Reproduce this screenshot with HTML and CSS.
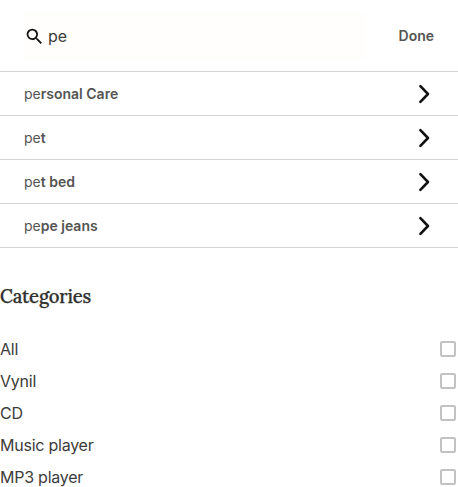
FILE: index.html
```html
<!DOCTYPE html>
<html lang="en">
<head>
<meta charset="utf-8">
<title>Search</title>
<link rel="stylesheet" href="styles.css">
</head>
<body>
<svg class="defs" aria-hidden="true">
  <symbol id="chevron" viewBox="0 0 12 20"><path d="M2.4 2.2 10 10 2.4 17.8"/></symbol>
</svg>
<header class="search">
  <div class="field">
    <svg class="glass" viewBox="0 0 24 24"><path d="M15.5 14h-.79l-.28-.27A6.471 6.471 0 0 0 16 9.5 6.5 6.5 0 1 0 9.5 16c1.61 0 3.09-.59 4.23-1.57l.27.28v.79l5 4.99L20.49 19l-4.99-5zm-6 0C7.01 14 5 11.99 5 9.5S7.01 5 9.5 5 14 7.01 14 9.5 11.99 14 9.5 14z"/></svg>
    <span>pe</span>
  </div>
  <span class="done">Done</span>
</header>
<ul class="suggestions">
  <li><span>pe<b>rsonal Care</b></span><svg class="chevron"><use href="#chevron"/></svg></li>
  <li><span>pe<b>t</b></span><svg class="chevron"><use href="#chevron"/></svg></li>
  <li><span>pe<b>t bed</b></span><svg class="chevron"><use href="#chevron"/></svg></li>
  <li><span>pe<b>pe jeans</b></span><svg class="chevron"><use href="#chevron"/></svg></li>
</ul>
<section class="categories">
  <h2>Categories</h2>
  <label>All<input type="checkbox"></label>
  <label>Vynil<input type="checkbox"></label>
  <label>CD<input type="checkbox"></label>
  <label>Music player<input type="checkbox"></label>
  <label>MP3 player<input type="checkbox"></label>
</section>
</body>
</html>
```
FILE: styles.css
```css
* { box-sizing: border-box; }
body {
  margin: 0;
  height: 487px;
  overflow: hidden;
  background: #fff;
  color: #3c3c3a;
  font: 16px/24px Inter, sans-serif;
}
.defs { display: none; }
.search {
  display: flex;
  align-items: center;
  justify-content: space-between;
  height: 72px;
  padding: 1px 24px 0 24px;
  border-bottom: 1px solid #d4d4d4;
}
.field {
  display: flex;
  align-items: center;
  width: 342px;
  height: 48px;
  border-radius: 4px;
  background: #fffefc;
}
.glass {
  width: 21px;
  height: 21px;
  margin-right: 2px;
  fill: #111;
}
.field span { padding-left: 1px; }
.done {
  color: #545452;
  font-size: 14px;
  font-weight: 600;
}
.suggestions {
  margin: 0;
  padding: 0;
  list-style: none;
}
.suggestions li {
  display: flex;
  align-items: center;
  justify-content: space-between;
  height: 44px;
  padding: 0 28px 0 24px;
  border-bottom: 1px solid #d4d4d4;
  color: #545452;
  font-size: 14px;
}
.suggestions b { font-weight: 600; }
.chevron {
  width: 12px;
  height: 20px;
  fill: none;
  stroke: #111;
  stroke-width: 2.6;
  stroke-linecap: round;
  stroke-linejoin: round;
}
.categories { padding-top: 36px; }
.categories h2 {
  margin: 0 0 25px;
  color: #30302e;
  font: 500 18.5px/24px Lora, "Liberation Serif", serif;
  letter-spacing: -0.2px;
  -webkit-text-stroke: 0.25px #30302e;
}
.categories label {
  display: flex;
  align-items: center;
  justify-content: space-between;
  height: 32px;
  padding-right: 2px;
  letter-spacing: -0.24px;
}
.categories input {
  appearance: none;
  width: 16px;
  height: 16px;
  margin: 0;
  border: 2px solid #c2c2c2;
  border-radius: 2px;
}
```
